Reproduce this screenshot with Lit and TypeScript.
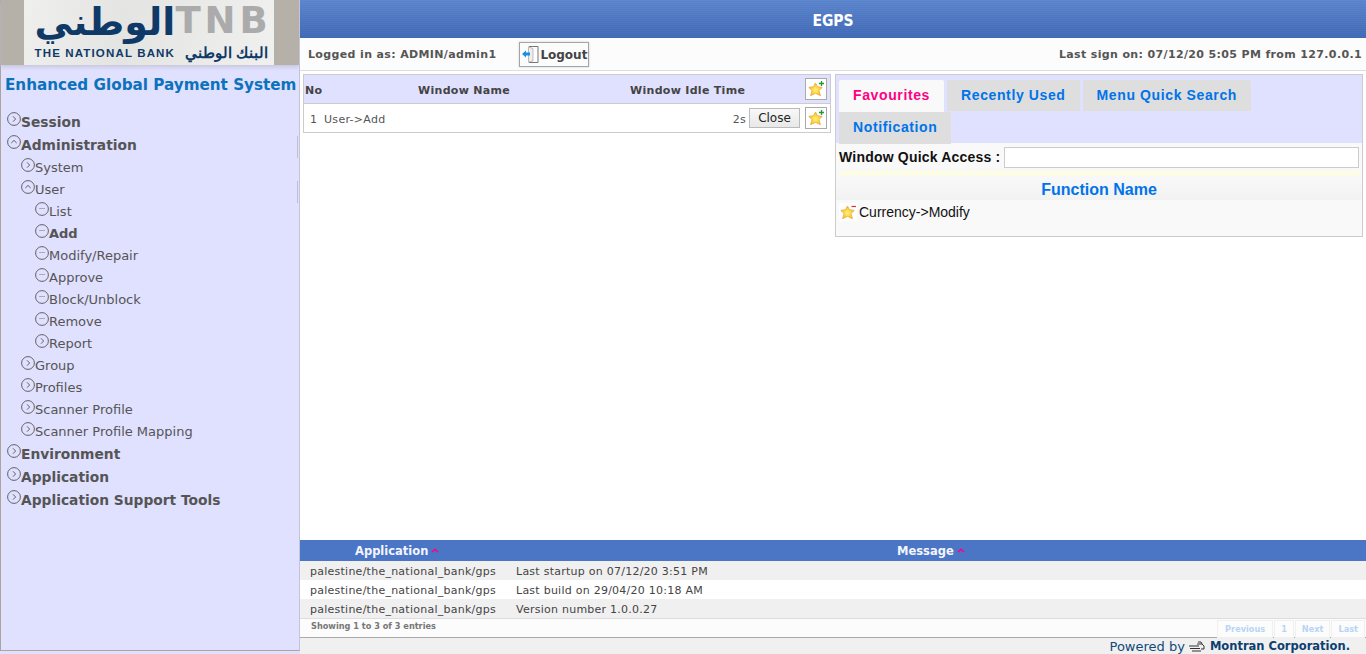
import { LitElement, html, css, svg } from 'lit';
import { customElement } from 'lit/decorators.js';

type Item = { label: string; level: number; icon: 'open' | 'closed' | 'leaf'; bold?: boolean; bar?: boolean };

const MENU: Item[] = [
  { label: 'Session', level: 0, icon: 'closed' },
  { label: 'Administration', level: 0, icon: 'open', bar: true },
  { label: 'System', level: 1, icon: 'closed' },
  { label: 'User', level: 1, icon: 'open', bar: true },
  { label: 'List', level: 2, icon: 'leaf' },
  { label: 'Add', level: 2, icon: 'leaf', bold: true },
  { label: 'Modify/Repair', level: 2, icon: 'leaf' },
  { label: 'Approve', level: 2, icon: 'leaf' },
  { label: 'Block/Unblock', level: 2, icon: 'leaf' },
  { label: 'Remove', level: 2, icon: 'leaf' },
  { label: 'Report', level: 2, icon: 'closed' },
  { label: 'Group', level: 1, icon: 'closed' },
  { label: 'Profiles', level: 1, icon: 'closed' },
  { label: 'Scanner Profile', level: 1, icon: 'closed' },
  { label: 'Scanner Profile Mapping', level: 1, icon: 'closed' },
  { label: 'Environment', level: 0, icon: 'closed' },
  { label: 'Application', level: 0, icon: 'closed' },
  { label: 'Application Support Tools', level: 0, icon: 'closed' },
];

const ROWS = [
  ['palestine/the_national_bank/gps', 'Last startup on 07/12/20 3:51 PM'],
  ['palestine/the_national_bank/gps', 'Last build on 29/04/20 10:18 AM'],
  ['palestine/the_national_bank/gps', 'Version number 1.0.0.27'],
];

function treeIcon(kind: string) {
  const inner =
    kind === 'closed'
      ? svg`<path d="M6 4.3 L8.6 7 L6 9.7" fill="none" stroke="#555" stroke-width="0.9"/>`
      : kind === 'open'
        ? svg`<path d="M4.3 8 L7 5.4 L9.7 8" fill="none" stroke="#555" stroke-width="0.9"/>`
        : svg`<path d="M4.6 6.5h0.9M6.6 6.5h0.9M8.6 6.5h0.9" fill="none" stroke="#666" stroke-width="1"/>`;
  return html`<svg class="ticon" width="14" height="14" viewBox="0 0 14 14">
    <circle cx="7" cy="7" r="6.4" fill="none" stroke="#555" stroke-width="0.9"/>${inner}
  </svg>`;
}

function star(plus: boolean) {
  return html`<svg width="18" height="18" viewBox="0 0 18 18">
    <defs>
      <radialGradient id="sg" cx="0.5" cy="0.55" r="0.6">
        <stop offset="0" stop-color="#fff27a"/>
        <stop offset="0.6" stop-color="#fdd02e"/>
        <stop offset="1" stop-color="#f39b26"/>
      </radialGradient>
    </defs>
    <path d="M8.5 3 L10.4 6.8 L15.2 7.4 L11.8 10.6 L13.4 15.6 L8.5 13.3 L3.6 15.6 L5.2 10.6 L1.8 7.4 L6.6 6.8 Z" fill="url(#sg)" stroke="#eeb04a" stroke-width="1" stroke-linejoin="round"/>
    ${plus
      ? svg`<path d="M14.5 1v5M12 3.5h5" stroke="#1a9a3c" stroke-width="1.3"/>`
      : svg`<path d="M12.5 3.5h4.5" stroke="#e03030" stroke-width="1.2"/>`}
  </svg>`;
}

@customElement('app-root')
export class AppRoot extends LitElement {
  static styles = css`
    :host {
      display: grid;
      grid-template-columns: 300px 1fr;
      height: 654px;
      width: 1366px;
      overflow: hidden;
      font-family: 'DejaVu Sans', Verdana, sans-serif;
      background: #f0f0f0;
      color: #555;
    }
    .side {
      height: 654px;
      background: #e0e0ff;
    }
    .side-in {
      height: 651px;
      box-sizing: border-box;
      border-left: 1px solid #aaa69e;
      border-right: 1px solid #c4c4d8;
      border-bottom: 1px solid #aaa69e;
      display: flex;
      flex-direction: column;
    }
    .logo {
      height: 65px;
      flex: none;
      background: #b5b1a8;
      box-shadow: 0 2px 4px #c4c4d8;
      display: flex;
      justify-content: center;
    }
    .logo-in {
      width: 250px;
      margin-left: -3px;
      background: linear-gradient(100deg, #efefed, #e4e4e2 40%, #f0f0ee);
      display: flex;
      flex-direction: column;
      padding: 4px 8px 0 11px;
      box-sizing: border-box;
    }
    .logo-top {
      display: flex;
      height: 37px;
      align-items: center;
      justify-content: space-between;
    }
    .logo-ar {
      font: bold 38px/37px 'DejaVu Sans', sans-serif;
      color: #0f3a67;
    }
    .logo-tnb {
      font: bold 37px/37px 'DejaVu Sans', sans-serif;
      color: #ababab;
      letter-spacing: 4px;
      margin: -4px -4px 0 0;
    }
    .logo-sub {
      display: flex;
      align-items: center;
      margin-top: 5px;
      font: bold 11.5px/14px 'Liberation Sans', sans-serif;
      color: #0f3a67;
      letter-spacing: 1.15px;
      white-space: nowrap;
    }
    .logo-sub i {
      width: 1px;
      height: 10px;
      background: #999;
      margin: 0 5px 0 5px;
    }
    .logo-sub span:last-child {
      letter-spacing: 0;
      font-size: 15px;
    }
    .title {
      margin: 10px 0 0 4px;
      height: 22px;
      font: bold 15.2px/20px 'DejaVu Sans', sans-serif;
      color: #0b72bb;
      white-space: nowrap;
    }
    .tree {
      margin-top: 14px;
      display: flex;
      flex-direction: column;
    }
    .node {
      position: relative;
      display: flex;
      align-items: flex-start;
      height: 22px;
      line-height: 22px;
      font-size: 13px;
      white-space: nowrap;
    }
    .node.l0 {
      height: 23px;
      line-height: 23px;
      font-size: 13.8px;
      font-weight: bold;
      padding-left: 6px;
    }
    .node.l1 {
      padding-left: 20px;
    }
    .node.l2 {
      padding-left: 34px;
    }
    .node.b {
      font-weight: bold;
    }
    .node.bar::after {
      content: '';
      position: absolute;
      right: 1px;
      top: 2px;
      width: 1px;
      height: 22px;
      background: #c0c0c8;
    }
    .ticon {
      flex: none;
      margin-top: 1px;
    }
    .main {
      display: flex;
      flex-direction: column;
      min-width: 0;
      height: 654px;
    }
    .top {
      flex: none;
      height: 38px;
      padding-top: 3px;
      box-sizing: border-box;
      background: repeating-linear-gradient(0deg, transparent 0 1px, rgba(255, 255, 255, 0.03) 1px 2px),
        linear-gradient(#5a84cc, #3f68b5);
      color: #fff;
      display: flex;
      align-items: center;
      justify-content: center;
      font: bold 15.5px 'DejaVu Sans Condensed', 'DejaVu Sans', sans-serif;
    }
    .bar-user {
      flex: none;
      height: 33px;
      box-sizing: border-box;
      border-bottom: 1px solid #ddd;
      background: #fcfcfc;
      display: flex;
      align-items: center;
      font-size: 11px;
      font-weight: bold;
      padding: 0 4px 0 8px;
      letter-spacing: 0.36px;
    }
    .logout {
      margin-left: 23px;
      width: 70px;
      height: 25px;
      box-sizing: border-box;
      border: 1px solid #a5a5a5;
      box-shadow: 0 0 2px #ccc;
      display: flex;
      align-items: center;
      padding-left: 1px;
      font-size: 12px;
      color: #444;
      letter-spacing: 0;
      margin-top: 1px;
    }
    .push {
      margin-left: auto;
    }
    .work {
      flex: 1;
      background: #fff;
      display: flex;
      align-items: flex-start;
      padding: 3px 3px 0 3px;
      gap: 4px;
      min-height: 0;
    }
    .windows {
      width: 528px;
      box-sizing: border-box;
      border: 1px solid #ccc;
      font-size: 11px;
    }
    .w-row {
      display: flex;
      align-items: center;
      height: 28px;
      padding: 0 3px 0 1px;
      box-sizing: border-box;
      letter-spacing: 0.3px;
    }
    .w-row > span {
      padding-top: 3px;
    }
    .w-row.head {
      background: #e0e0ff;
      border-bottom: 1px solid #ccc;
      height: 29px;
      font-weight: bold;
      color: #444;
    }
    .w-no {
      width: 113px;
    }
    .w-name {
      width: 212px;
    }
    .w-time {
      flex: 1;
    }
    .w-row .idx {
      width: 19px;
      padding-left: 5px;
      box-sizing: border-box;
    }
    .w-row .grow {
      flex: 1;
    }
    .close {
      width: 51px;
      height: 20px;
      box-sizing: border-box;
      margin: 0 5px 0 3px;
      border: 1px solid #bbb;
      background: linear-gradient(#f8f8f8, #e8e8e8);
      color: #222;
      font-size: 12px;
      letter-spacing: 0;
      line-height: 18px;
      text-align: center;
    }
    .fav-btn {
      width: 22px;
      height: 22px;
      flex: none;
      box-sizing: border-box;
      border: 1px solid #aaa;
      background: #fff;
      display: flex;
      align-items: center;
      justify-content: center;
    }
    .panel {
      width: 528px;
      height: 163px;
      box-sizing: border-box;
      border: 1px solid #ccc;
      background: #f9f9f9;
      font-family: 'Liberation Sans', Arial, sans-serif;
    }
    .tabs {
      background: #e0e0ff;
      height: 68px;
      padding: 5px 3px 0;
      box-sizing: border-box;
      display: flex;
      flex-wrap: wrap;
      align-content: flex-start;
      gap: 0 3px;
    }
    .tab {
      height: 31px;
      padding: 0 14px;
      margin-bottom: 1px;
      box-sizing: border-box;
      background: #dedede;
      color: #0073ea;
      font-size: 14px;
      font-weight: bold;
      letter-spacing: 0.62px;
      line-height: 31px;
      border-radius: 2px 2px 0 0;
    }
    .tab.on {
      background: #f9f9f9;
      color: #ff0084;
      line-height: 30px;
      height: 32px;
      margin-bottom: 0;
    }
    .tab:last-child {
      height: 32px;
      margin-bottom: 0;
    }
    .quick {
      display: flex;
      align-items: center;
      height: 28px;
      padding: 0 3px;
      font-size: 14px;
      font-weight: bold;
      color: #111;
      letter-spacing: 0.2px;
      white-space: nowrap;
    }
    .quick div {
      flex: 1;
      height: 21px;
      box-sizing: border-box;
      margin-left: 4px;
      border: 1px solid #ccc;
      background: #fff;
    }
    .stripe {
      height: 4px;
      margin: 0 3px;
      background: #fdfde0;
    }
    .fname {
      height: 25px;
      line-height: 30px;
      background: linear-gradient(#f9f9f9, #f2f2f2);
      color: #0073ea;
      text-align: center;
      font-size: 16px;
      font-weight: bold;
    }
    .fitem {
      display: flex;
      align-items: center;
      gap: 2px;
      height: 20px;
      padding-left: 3px;
      margin-top: 2px;
      font-size: 14px;
      color: #111;
    }
    .fitem svg {
      background: #fff;
    }
    .list {
      flex: none;
      background: #f0f0f0;
      font-size: 11px;
      letter-spacing: 0.25px;
      color: #444;
      border-bottom: 1px solid #aaa;
    }
    .l-head {
      height: 21px;
      background: #4a76c5;
      color: #f4f4ff;
      display: flex;
      align-items: center;
      font-size: 11.5px;
      letter-spacing: 0;
      font-weight: bold;
    }
    .l-head span {
      display: inline-flex;
      align-items: center;
    }
    .l-head svg {
      margin-left: 3px;
    }
    .l-app {
      width: 597px;
      padding-left: 55px;
      box-sizing: border-box;
    }
    .l-row {
      height: 19px;
      box-sizing: border-box;
      display: flex;
      align-items: center;
      padding: 1px 0 0 10px;
    }
    .l-row:nth-of-type(odd) {
      background: #fff;
    }
    .l-row span:first-child {
      width: 206px;
    }
    .l-foot {
      height: 19px;
      box-sizing: border-box;
      background: #fcfcfc;
      border-top: 1px solid #ddd;
      display: flex;
      align-items: flex-start;
      padding: 1px 1px 0 11px;
      font-size: 8.2px;
      letter-spacing: 0;
      font-weight: bold;
      color: #777;
    }
    .l-foot > span {
      margin-top: 1px;
    }
    .pager {
      margin-left: auto;
      display: flex;
      gap: 1px;
    }
    .pager span {
      height: 18px;
      line-height: 17px;
      padding: 0 6px;
      border: 1px solid #f0f0f0;
      box-sizing: border-box;
      color: #b9d4f5;
    }
    .pager span:first-child {
      padding: 0 7px;
    }
    .foot {
      flex: none;
      height: 16px;
      display: flex;
      justify-content: flex-end;
      align-items: center;
      gap: 4px;
      padding-right: 16px;
      font-size: 13px;
      color: #0f4a7a;
      white-space: nowrap;
    }
    .foot b {
      font-size: 11.5px;
      color: #0c3f70;
    }
  `;

  render() {
    const caret = html`<svg width="8" height="5" viewBox="0 0 8 5"><path d="M1 4 L4 1.4 L7 4" fill="none" stroke="#ff0084" stroke-width="1.6"/></svg>`;
    return html`
      <aside class="side">
        <div class="side-in">
          <div class="logo">
            <div class="logo-in">
              <div class="logo-top">
                <span class="logo-ar">الوطني</span><span class="logo-tnb">TNB</span>
              </div>
              <div class="logo-sub"><span>THE NATIONAL BANK</span><i></i><span>البنك الوطني</span></div>
            </div>
          </div>
          <div class="title">Enhanced Global Payment System</div>
          <div class="tree">
            ${MENU.map(
              (m) => html`<div class="node l${m.level} ${m.bold ? 'b' : ''} ${m.bar ? 'bar' : ''}">
                ${treeIcon(m.icon)}<span>${m.label}</span>
              </div>`,
            )}
          </div>
        </div>
      </aside>
      <section class="main">
        <div class="top">EGPS</div>
        <div class="bar-user">
          <span>Logged in as: ADMIN/admin1</span>
          <div class="logout">
            <svg width="19" height="21" viewBox="0 0 19 21">
              <path d="M8 2.5h9v16h-9z" fill="#fff" stroke="#777" stroke-width="1"/>
              <path d="M8 3 L12 4.5 V17 L8 18" fill="#eee" stroke="#999" stroke-width="0.6"/>
              <path d="M1 10 L5 6.5 V8.5 H9 V11.5 H5 V13.5 Z" fill="#1b8fe0"/>
            </svg>
            <span>Logout</span>
          </div>
          <span class="push">Last sign on: 07/12/20 5:05 PM from 127.0.0.1</span>
        </div>
        <div class="work">
          <div class="windows">
            <div class="w-row head">
              <span class="w-no">No</span><span class="w-name">Window Name</span>
              <span class="w-time">Window Idle Time</span>
              <div class="fav-btn">${star(true)}</div>
            </div>
            <div class="w-row">
              <span class="idx">1</span><span class="grow">User-&gt;Add</span><span>2s</span>
              <div class="close">Close</div>
              <div class="fav-btn">${star(true)}</div>
            </div>
          </div>
          <div class="panel">
            <div class="tabs">
              <div class="tab on">Favourites</div>
              <div class="tab">Recently Used</div>
              <div class="tab">Menu Quick Search</div>
              <div class="tab">Notification</div>
            </div>
            <div class="quick">Window Quick Access :<div></div></div>
            <div class="stripe"></div>
            <div class="fname">Function Name</div>
            <div class="fitem">${star(false)}<span>Currency-&gt;Modify</span></div>
          </div>
        </div>
        <div class="list">
          <div class="l-head">
            <span class="l-app">Application${caret}</span><span>Message${caret}</span>
          </div>
          ${ROWS.map((r) => html`<div class="l-row"><span>${r[0]}</span><span>${r[1]}</span></div>`)}
          <div class="l-foot">
            <span>Showing 1 to 3 of 3 entries</span>
            <div class="pager"><span>Previous</span><span>1</span><span>Next</span><span>Last</span></div>
          </div>
        </div>
        <div class="foot">
          <span>Powered by</span>
          <svg width="17" height="11" viewBox="0 0 17 11">
            <path d="M0 5h10M1 7.5h10M3 10h9M8 3h5l2 2v3h-3M9 1h3l1 2" fill="none" stroke="#333" stroke-width="1"/>
          </svg>
          <b>Montran Corporation.</b>
        </div>
      </section>
    `;
  }
}
